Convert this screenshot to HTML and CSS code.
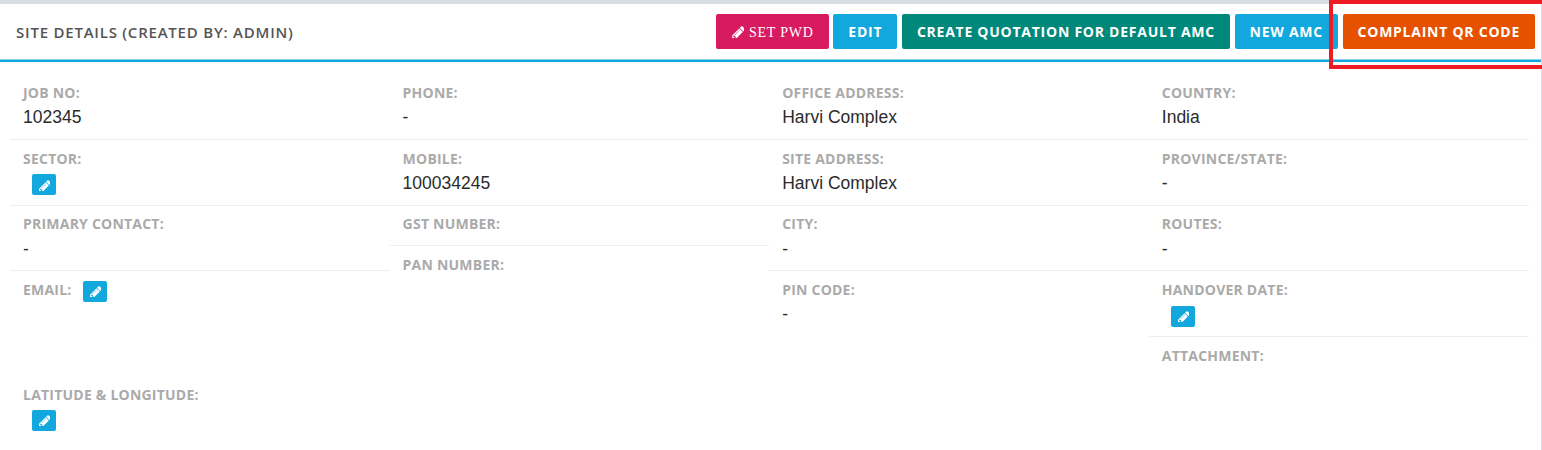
FILE: index.html
```html
<!DOCTYPE html>
<html lang="en">
<head>
<meta charset="utf-8">
<title>Site Details</title>
<link rel="stylesheet" href="styles.css">
</head>
<body>
<svg class="defs" width="0" height="0"><symbol id="pencil" viewBox="0 0 1515 1536"><path d="M491 1536l91-91-235-235-91 91v107h128v128h107zm523-928q0-22-22-22-10 0-17 7l-542 542q-7 7-7 17 0 22 22 22 10 0 17-7l542-542q7-7 7-17zm-54-192l416 416-832 832h-416v-416zm683 96q0 53-37 90l-166 166-416-416 166-165q36-38 90-38 53 0 91 38l235 234q37 39 37 91z"/></symbol></svg>
<main class="card">
  <header class="head">
    <h1 class="title">SITE DETAILS (CREATED BY: ADMIN)</h1>
    <div class="actions">
      <button class="btn btn-pink"><svg class="ico"><use href="#pencil"/></svg>SET PWD</button>
      <button class="btn btn-blue">EDIT</button>
      <button class="btn btn-teal">CREATE QUOTATION FOR DEFAULT AMC</button>
      <button class="btn btn-blue">NEW AMC</button>
      <button class="btn btn-orange">COMPLAINT QR CODE</button>
    </div>
  </header>
  <section class="details details-main">
    <div class="col">
      <div class="item full line"><div class="label">JOB NO:</div><div class="value">102345</div></div>
      <div class="item full line"><div class="label">SECTOR:</div><div class="value"><a class="mini"><svg class="ico-mini"><use href="#pencil"/></svg></a></div></div>
      <div class="item full line"><div class="label">PRIMARY CONTACT:</div><div class="value">-</div></div>
      <div class="item inline"><div class="label">EMAIL:</div><a class="mini"><svg class="ico-mini"><use href="#pencil"/></svg></a></div>
    </div>
    <div class="col">
      <div class="item full line"><div class="label">PHONE:</div><div class="value">-</div></div>
      <div class="item full line"><div class="label">MOBILE:</div><div class="value">100034245</div></div>
      <div class="item short line"><div class="label">GST NUMBER:</div></div>
      <div class="item short"><div class="label">PAN NUMBER:</div></div>
    </div>
    <div class="col">
      <div class="item full line"><div class="label">OFFICE ADDRESS:</div><div class="value">Harvi Complex</div></div>
      <div class="item full line"><div class="label">SITE ADDRESS:</div><div class="value">Harvi Complex</div></div>
      <div class="item full line"><div class="label">CITY:</div><div class="value">-</div></div>
      <div class="item full"><div class="label">PIN CODE:</div><div class="value">-</div></div>
    </div>
    <div class="col col-last">
      <div class="item full line"><div class="label">COUNTRY:</div><div class="value">India</div></div>
      <div class="item full line"><div class="label">PROVINCE/STATE:</div><div class="value">-</div></div>
      <div class="item full line"><div class="label">ROUTES:</div><div class="value">-</div></div>
      <div class="item full line"><div class="label">HANDOVER DATE:</div><div class="value"><a class="mini"><svg class="ico-mini"><use href="#pencil"/></svg></a></div></div>
      <div class="item short"><div class="label">ATTACHMENT:</div></div>
    </div>
  </section>
  <section class="details details-extra">
    <div class="col">
      <div class="item full"><div class="label">LATITUDE &amp; LONGITUDE:</div><div class="value"><a class="mini"><svg class="ico-mini"><use href="#pencil"/></svg></a></div></div>
    </div>
  </section>
</main>
<div class="highlight"></div>
</body>
</html>
```
FILE: styles.css
```css
* { box-sizing: border-box; }
html, body { margin: 0; height: 100%; overflow: hidden; }
body { background: #d8dce3; padding-top: 4px; position: relative; font-family: "Open Sans", sans-serif; }
.defs { position: absolute; }
.card { background: #fff; width: 1541px; height: 446px; }
.head {
  height: 58px;
  display: flex;
  align-items: flex-start;
  justify-content: space-between;
  padding: 10px 6px 0 16px;
  border-bottom: 2px solid #12a8dd;
  box-shadow: inset 0 -1px 0 #7fd0ec;
}
.title { margin: 8px 0 0; font-size: 15px; line-height: 20px; font-weight: 600; letter-spacing: .78px; color: #555; }
.actions { display: flex; gap: 4.6px; }
.btn {
  height: 35px;
  padding: 0 15px;
  border: 0;
  border-radius: 2px;
  color: #fff;
  font-family: "Open Sans", sans-serif;
  font-size: 14px;
  font-weight: 700;
  letter-spacing: .75px;
  white-space: nowrap;
}
.btn-pink { background: #d81b60; font-family: "Liberation Serif", serif; font-weight: 400; font-size: 14px; letter-spacing: .8px; display: flex; align-items: center; padding-top: 2px; }
.btn-blue { background: #12a8dd; }
.btn-teal { background: #00897b; }
.btn-orange { background: #e65100; }
.ico { width: 13px; height: 13px; fill: #fff; margin: -2px 5px 0 0; }
.details { display: flex; padding-left: 10px; width: 1530px; }
.details-main { padding-top: 12.33px; }
.details-extra { margin-top: -1px; }
.details-extra .value .mini { margin-top: 3.5px; }
.col { width: 379.6px; }
.col-last { width: 380px; }
.item { padding: 8.8px 13px 0; }
.full { height: 65.67px; }
.short { height: 40.5px; }
.line { border-bottom: 1px solid #eee; }
.inline { display: flex; align-items: flex-start; gap: 11px; padding-top: 9.6px; }
.inline .label { margin-top: -.6px; }
.label { font-size: 14px; line-height: 19px; font-weight: 700; letter-spacing: .22px; color: #aaa; }
.value { font-family: "Liberation Sans", Arial, sans-serif; font-size: 17.5px; line-height: 26px; padding-top: 2.2px; color: #2b2b2b; }
.value .mini { margin: 4.5px 0 0 9px; }
.mini { width: 24px; height: 21px; display: flex; align-items: center; justify-content: center; background: #12a8dd; border-radius: 2px; }
.ico-mini { width: 12px; height: 12px; fill: #fff; }
.highlight { position: absolute; left: 1329px; top: 0; width: 240px; height: 69px; border: 4px solid #ed1c24; }
```
